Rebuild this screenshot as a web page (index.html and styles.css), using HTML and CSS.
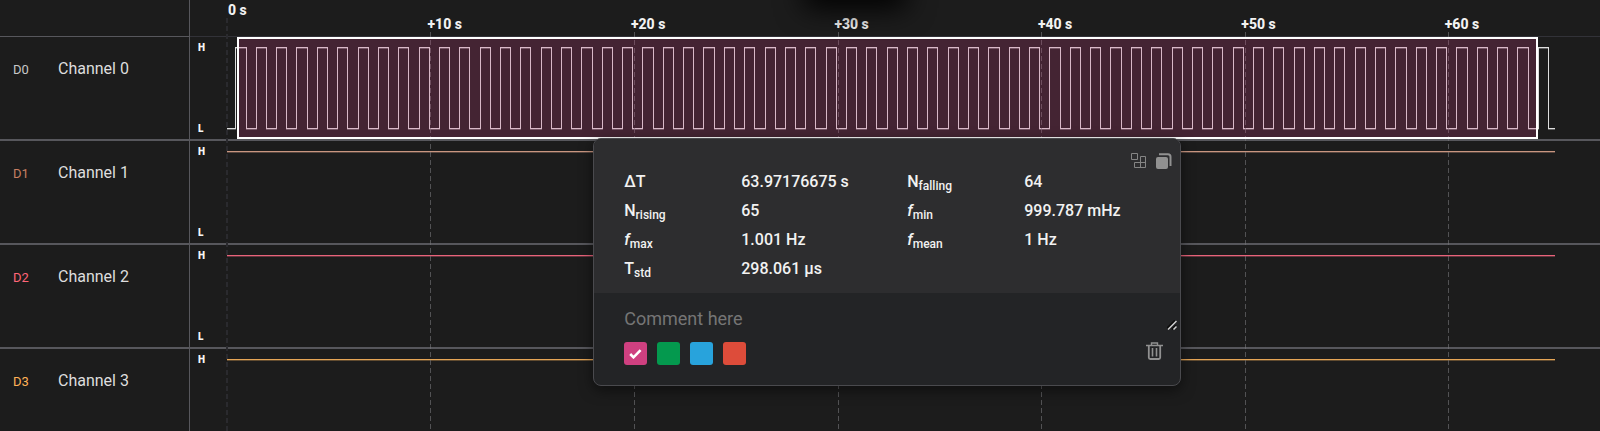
FILE: index.html
```html
<!DOCTYPE html>
<html lang="en">
<head>
<meta charset="utf-8">
<title>Logic capture</title>
<link rel="stylesheet" href="styles.css">
</head>
<body>
<main class="analyzer">
  <aside class="channels">
    <div class="channels-head"></div>
    <div class="channel"><span class="channel-id id-0">D0</span><span class="channel-name">Channel 0</span></div>
    <div class="channel"><span class="channel-id id-1">D1</span><span class="channel-name">Channel 1</span></div>
    <div class="channel"><span class="channel-id id-2">D2</span><span class="channel-name">Channel 2</span></div>
    <div class="channel"><span class="channel-id id-3">D3</span><span class="channel-name">Channel 3</span></div>
  </aside>
  <section class="plot">
    <div class="axis">
      <span class="tick tick-start">0 s</span>
      <span class="tick">+10 s</span>
      <span class="tick">+20 s</span>
      <span class="tick">+30 s</span>
      <span class="tick">+40 s</span>
      <span class="tick">+50 s</span>
      <span class="tick">+60 s</span>
    </div>
    <div class="lane">
      <svg class="wave wave-0" viewBox="0 0 1410 102" preserveAspectRatio="none"><path class="glow" id="clock-glow"/><path id="clock"/></svg>
      <div class="levels"><span>H</span><span>L</span></div>
    </div>
    <div class="lane">
      <svg class="wave wave-1" viewBox="0 0 1410 102" preserveAspectRatio="none"><path class="glow" d="M37 11.5H1365"/><path d="M37 10.5H1365"/></svg>
      <div class="levels"><span>H</span><span>L</span></div>
    </div>
    <div class="lane">
      <svg class="wave wave-2" viewBox="0 0 1410 102" preserveAspectRatio="none"><path class="glow" d="M37 11.5H1365"/><path d="M37 10.5H1365"/></svg>
      <div class="levels"><span>H</span><span>L</span></div>
    </div>
    <div class="lane">
      <svg class="wave wave-3" viewBox="0 0 1410 102" preserveAspectRatio="none"><path class="glow" d="M37 11.5H1365"/><path d="M37 10.5H1365"/></svg>
      <div class="levels"><span>H</span></div>
    </div>

    <svg class="grid-lines" viewBox="0 0 1410 431" preserveAspectRatio="none">
      <path class="grid-start" d="M37 18V431"/>
      <path d="M240.5 32V431M444.5 32V431M648.5 32V431M851.5 32V431M1055.5 32V431M1258.5 32V431"/>
    </svg>
    <div class="selection"></div>
    <div class="top-shadow"></div>

    <form class="popup">
      <div class="measures">
        <div class="tools">
          <button type="button" class="icon-button" aria-label="Choose measurements">
            <svg width="16" height="16" viewBox="0 0 16 16" fill="none" stroke="#858585"><path d="M.5.5h6v6h-6zM9.500 3.500h5v11h-11v-5h11M9.500 3.500v11"/></svg>
          </button>
          <button type="button" class="icon-button" aria-label="Copy measurements">
            <svg width="16" height="16" viewBox="0 0 16 16"><rect x="0" y="4" width="12" height="12" rx="2" fill="#919191"/><path d="M3 1.2h9a2.5 2.5 0 0 1 2.500 2.500V13" fill="none" stroke="#919191" stroke-width="2"/></svg>
          </button>
        </div>
        <dl class="values">
          <dt>ΔT</dt><dd>63.97176675 s</dd>
          <dt>N<sub>falling</sub></dt><dd>64</dd>
          <dt>N<sub>rising</sub></dt><dd>65</dd>
          <dt><i>f</i><sub>min</sub></dt><dd>999.787 mHz</dd>
          <dt><i>f</i><sub>max</sub></dt><dd>1.001 Hz</dd>
          <dt><i>f</i><sub>mean</sub></dt><dd>1 Hz</dd>
          <dt>T<sub>std</sub></dt><dd>298.061 µs</dd>
        </dl>
      </div>
      <div class="comment-box">
        <textarea class="comment" rows="1" placeholder="Comment here" aria-label="Comment"></textarea>
        <svg class="grip" width="10" height="10" viewBox="0 0 10 10" fill="none"><path d="M0 8.500L8 .5M5 9.500L9 5.500" stroke="#0c0c0c" stroke-width="2"/><path d="M1 9.500L9.500 1M6.500 9.500L9.500 6.500" stroke="#d0d0d0" stroke-width="1.500"/></svg>
      </div>
      <div class="actions">
        <label class="swatch pink"><input type="radio" name="color" aria-label="Pink" checked><svg width="13" height="10" viewBox="0 0 13 10"><path d="M1.200 5l3.300 3.300L11.600 1.200" fill="none" stroke="#fff" stroke-width="2.600"/></svg></label>
        <label class="swatch green"><input type="radio" name="color" aria-label="Green"></label>
        <label class="swatch blue"><input type="radio" name="color" aria-label="Blue"></label>
        <label class="swatch red"><input type="radio" name="color" aria-label="Red"></label>
        <button type="button" class="icon-button trash" aria-label="Delete">
          <svg width="17" height="18" viewBox="0 0 17 18" fill="none" stroke="#919191"><path d="M0 3.500h17" stroke-width="1.600"/><path d="M5.500 3V1h6v2" stroke-width="1.400"/><path d="M2.800 4v11.500q0 1.500 1.500 1.500h8.400q1.500 0 1.500-1.500V4" stroke-width="1.800"/><path d="M6.500 6v8.500M10.500 6v8.500" stroke-width="1.600"/></svg>
        </button>
      </div>
    </form>
  </section>
</main>
<script src="wave.js"></script>
</body>
</html>
```
FILE: styles.css
```css
* { box-sizing: border-box; }

body {
  margin: 0;
  background: #1c1c1c;
  color: #dedede;
  font-family: Roboto, sans-serif;
  font-size: 16px;
  overflow: hidden;
}

.analyzer { display: flex; height: 100vh; overflow: hidden; }

.channels { flex: none; width: 190px; border-right: 1px solid #57575c; }
.channels-head { height: 37px; border-bottom: 1px solid #57575c; }
.channel {
  display: flex;
  align-items: baseline;
  height: 104px;
  padding: 22px 0 0 13px;
  border-bottom: 2px solid #57575c;
  line-height: 20px;
}
.channel-id { width: 45px; font-size: 13px; }
.channel-name { font-size: 16px; }
.id-0 { color: #c8c8c8; }
.id-1 { color: #c87f62; }
.id-2 { color: #ff6577; }
.id-3 { color: #ffb257; }

.plot { position: relative; flex: 1; min-width: 0; }

.axis {
  display: flex;
  height: 37px;
  padding: 15px 0 0 2.7%;
  border-bottom: 1px solid #323238;
  font-size: 14px;
  font-weight: 800;
  line-height: 18px;
  color: #f2f2f2;
  white-space: nowrap;
}
.tick { flex: none; width: 14.83%; margin-left: -4px; margin-right: 4px; }
.tick-start { margin: -14px 0 0; }

.lane { position: relative; height: 104px; border-bottom: 2px solid #57575c; }
.levels {
  display: flex;
  flex-direction: column;
  justify-content: space-between;
  position: relative;
  width: 24px;
  height: 102px;
  padding: 4px 0 3px 8px;
  font-size: 10px;
  font-weight: 900;
  line-height: 14px;
  color: #f5f5f5;
}

.wave { position: absolute; inset: 0; width: 100%; height: 102px; }
.wave path {
  fill: none;
  stroke: currentColor;
  vector-effect: non-scaling-stroke;
  shape-rendering: crispEdges;
}
.wave .glow { opacity: .35; }
.wave-0 { color: #dedede; }
.wave-1 { color: #c99680; }
.wave-2 { color: #e8637a; }
.wave-3 { color: #e5a556; }

.grid-lines { position: absolute; top: 0; left: 0; width: 100%; height: 431px; }
.grid-lines path {
  fill: none;
  stroke: #77777a;
  stroke-opacity: .6;
  stroke-dasharray: 5 3;
  vector-effect: non-scaling-stroke;
}
.grid-lines .grid-start { stroke: #2a2a2e; stroke-opacity: 1; stroke-width: 2px; }

.selection {
  position: absolute;
  top: 37px;
  left: 3.34%;
  width: 92.25%;
  height: 102px;
  border: 2px solid #fff;
  background: rgba(205, 64, 130, .23);
}

.top-shadow {
  position: absolute;
  top: -20px;
  left: 44%;
  width: 90px;
  height: 20px;
  box-shadow: 0 2px 28px 6px #000;
}

.popup {
  position: absolute;
  top: 138px;
  left: 28.6%;
  width: 588px;
  border: 1px solid #4a4a4e;
  border-radius: 8px;
  background: #232426;
  box-shadow: 0 4px 14px rgba(0, 0, 0, .5);
  overflow: hidden;
}
.measures { padding: 14px 8px 10px 30px; background: #2d2d2f; }
.tools { display: flex; justify-content: flex-end; gap: 9px; height: 14px; }
.icon-button { display: flex; padding: 0; border: 0; background: none; }

.values {
  display: grid;
  grid-template-columns: 117px 166px 117px 1fr;
  margin: 0;
  font-weight: 500;
  color: #f2f2f2;
}
.values dt, .values dd { height: 29px; margin: 0; line-height: 29px; }
.values sub { font-size: 12px; line-height: 0; vertical-align: -3px; }

.comment-box { position: relative; }
.comment {
  display: block;
  width: 100%;
  height: 38px;
  padding: 15px 30px 1px;
  border: 0;
  outline: 0;
  background: none;
  color: #f2f2f2;
  font: 18px/22px Roboto, sans-serif;
  resize: none;
  overflow: hidden;
}
.comment::placeholder { color: #757575; }
.grip { position: absolute; right: 3px; bottom: 1px; }

.actions { display: flex; gap: 10px; padding: 11px 17px 20px 30px; }
.swatch { display: grid; place-items: center; width: 23px; height: 23px; border-radius: 3px; }
.swatch input, .swatch svg { grid-area: 1 / 1; }
.swatch input { appearance: none; width: 23px; height: 23px; margin: 0; }
.pink { background: #cf4080; }
.green { background: #04994e; }
.blue { background: #28a3dc; }
.red { background: #dd4c3a; }
.trash { margin-left: auto; }
```
FILE: wave.js
```js
// Builds the 1 Hz square wave: 65 rising edges between the high and low levels.
function squareWave(high, low) {
  const period = 20.35;
  let d = `M37 ${low}`;
  for (let i = 0; i < 65; i++) {
    const rise = 45.9 + i * period;
    d += `H${rise.toFixed(2)}V${high}H${(rise + period / 2).toFixed(2)}V${low}`;
  }
  return d + 'H1365';
}
document.getElementById('clock').setAttribute('d', squareWave(10.5, 91.5));
// Soft second row under each horizontal run.
document.getElementById('clock-glow').setAttribute('d', squareWave(11.5, 92.5));
```
